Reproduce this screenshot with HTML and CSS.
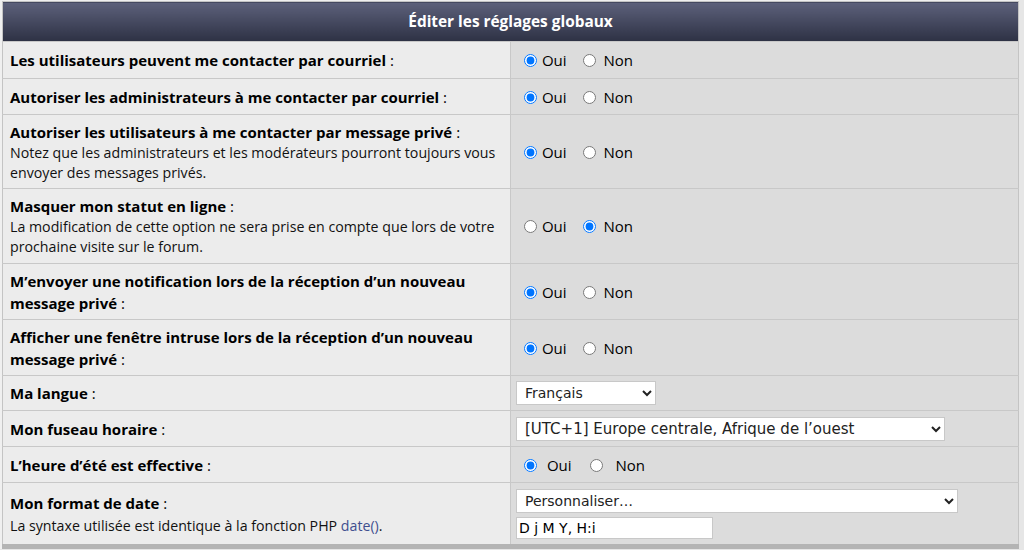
FILE: index.html
```html
<!DOCTYPE html>
<html lang="fr">
<head>
<meta charset="utf-8">
<title>Éditer les réglages globaux</title>
<link rel="stylesheet" href="styles.css">
</head>
<body>
<div class="panel">
<table class="settings">
  <thead>
    <tr><th colspan="2" class="head">Éditer les réglages globaux</th></tr>
  </thead>
  <tbody>
    <tr class="r1">
      <td class="label"><b>Les utilisateurs peuvent me contacter par courriel</b> :</td>
      <td class="field"><label class="opt"><input type="radio" name="a" checked> Oui</label><label class="opt"><input type="radio" name="a"> Non</label></td>
    </tr>
    <tr class="r2">
      <td class="label"><b>Autoriser les administrateurs à me contacter par courriel</b> :</td>
      <td class="field"><label class="opt"><input type="radio" name="b" checked> Oui</label><label class="opt"><input type="radio" name="b"> Non</label></td>
    </tr>
    <tr class="r3">
      <td class="label"><b>Autoriser les utilisateurs à me contacter par message privé</b> :<br><span class="desc">Notez que les administrateurs et les modérateurs pourront toujours vous envoyer des messages privés.</span></td>
      <td class="field"><label class="opt"><input type="radio" name="c" checked> Oui</label><label class="opt"><input type="radio" name="c"> Non</label></td>
    </tr>
    <tr class="r4">
      <td class="label"><b>Masquer mon statut en ligne</b> :<br><span class="desc">La modification de cette option ne sera prise en compte que lors de votre prochaine visite sur le forum.</span></td>
      <td class="field"><label class="opt"><input type="radio" name="d"> Oui</label><label class="opt"><input type="radio" name="d" checked> Non</label></td>
    </tr>
    <tr class="r5">
      <td class="label"><b>M’envoyer une notification lors de la réception d’un nouveau message privé</b> :</td>
      <td class="field"><label class="opt"><input type="radio" name="e" checked> Oui</label><label class="opt"><input type="radio" name="e"> Non</label></td>
    </tr>
    <tr class="r6">
      <td class="label"><b>Afficher une fenêtre intruse lors de la réception d’un nouveau message privé</b> :</td>
      <td class="field"><label class="opt"><input type="radio" name="f" checked> Oui</label><label class="opt"><input type="radio" name="f"> Non</label></td>
    </tr>
    <tr class="r7">
      <td class="label"><b>Ma langue</b> :</td>
      <td class="field"><select class="sel sel-lang"><option>Français</option></select></td>
    </tr>
    <tr class="r8">
      <td class="label"><b>Mon fuseau horaire</b> :</td>
      <td class="field"><select class="sel sel-tz"><option>[UTC+1] Europe centrale, Afrique de l’ouest</option></select></td>
    </tr>
    <tr class="r9">
      <td class="label"><b>L’heure d’été est effective</b> :</td>
      <td class="field wide"><label class="opt"><input type="radio" name="g" checked> Oui</label><label class="opt"><input type="radio" name="g"> Non</label></td>
    </tr>
    <tr class="r10">
      <td class="label"><b>Mon format de date</b> :<br><span class="desc">La syntaxe utilisée est identique à la fonction PHP <a class="lnk" href="#">date()</a>.</span></td>
      <td class="field"><select class="sel sel-date"><option>Personnaliser…</option></select><br><input class="txt" type="text" value="D j M Y, H:i"></td>
    </tr>
  </tbody>
</table>
</div>
</body>
</html>
```
FILE: styles.css
```css
html, body {
  margin: 0;
  padding: 0;
  background: #e6e6e6;
}
body {
  width: 1024px;
  height: 550px;
  overflow: hidden;
  font-family: "Open Sans", "DejaVu Sans", sans-serif;
  color: #000;
}
.panel {
  padding: 1px 0 0 2px;
  width: 1017px;
  background: #f0f0f0;
}
.settings {
  width: 1017px;
  border-collapse: collapse;
  border: 1px solid #c4c4c4;
  border-bottom: 5px solid #b4b4b4;
}
.head {
  height: 39px;
  padding: 0;
  background: linear-gradient(#5d617b, #2d3144);
  color: #fff;
  font-size: 15.4px;
  font-weight: bold;
  text-align: center;
  vertical-align: middle;
}
.settings td {
  border-top: 1px solid #c8c8c8;
  vertical-align: middle;
}
.label {
  width: 494px;
  padding: 4px 6px 4px 7px;
  background: #ececec;
  font-size: 15px;
  line-height: 22px;
  border-right: 1px solid #c8c8c8;
}
.label b { font-weight: bold; }
.desc {
  display: inline-block;
  font-size: 14.2px;
  line-height: 20px;
  color: #111;
}
.lnk { color: #3f4f8f; text-decoration: none; }
.field {
  padding: 4px 5px;
  background: #dcdcdc;
  font-family: "Open Sans", "DejaVu Sans", sans-serif;
  font-size: 15px;
}
.opt {
  margin-right: 8px;
}
.opt input {
  margin: 0 1px 0 8px;
  vertical-align: -1px;
}
.opt + .opt input { margin-right: 4px; }
.wide .opt { margin-right: 10px; }
.wide .opt input { margin-right: 6px; }
.wide .opt + .opt input { margin-right: 9px; }
.r1 td { height: 28px; }
.r2 td { height: 27px; }
.r3 td { height: 65px; }
.r4 td { height: 66px; }
.r5 td { height: 47px; }
.r6 td { height: 47px; }
.r7 td { height: 26px; }
.r8 td { height: 27px; }
.r9 td { height: 27px; }
.r10 td { height: 53px; }
.sel {
  height: 24px;
  border: 1px solid #c8c8c8;
  background: #fff;
  font-family: "DejaVu Sans", sans-serif;
  font-size: 14px;
  color: #222;
  padding: 0 4px;
}
.sel-lang { width: 140px; }
.sel-tz { width: 429px; font-size: 15px; }
.sel-date { width: 442px; margin-top: 1px; }
.txt {
  margin-top: 4px;
  width: 197px;
  height: 22px;
  box-sizing: border-box;
  border: 1px solid #c8c8c8;
  font-family: "DejaVu Sans", sans-serif;
  font-size: 14px;
  padding: 0 2px;
}
```
